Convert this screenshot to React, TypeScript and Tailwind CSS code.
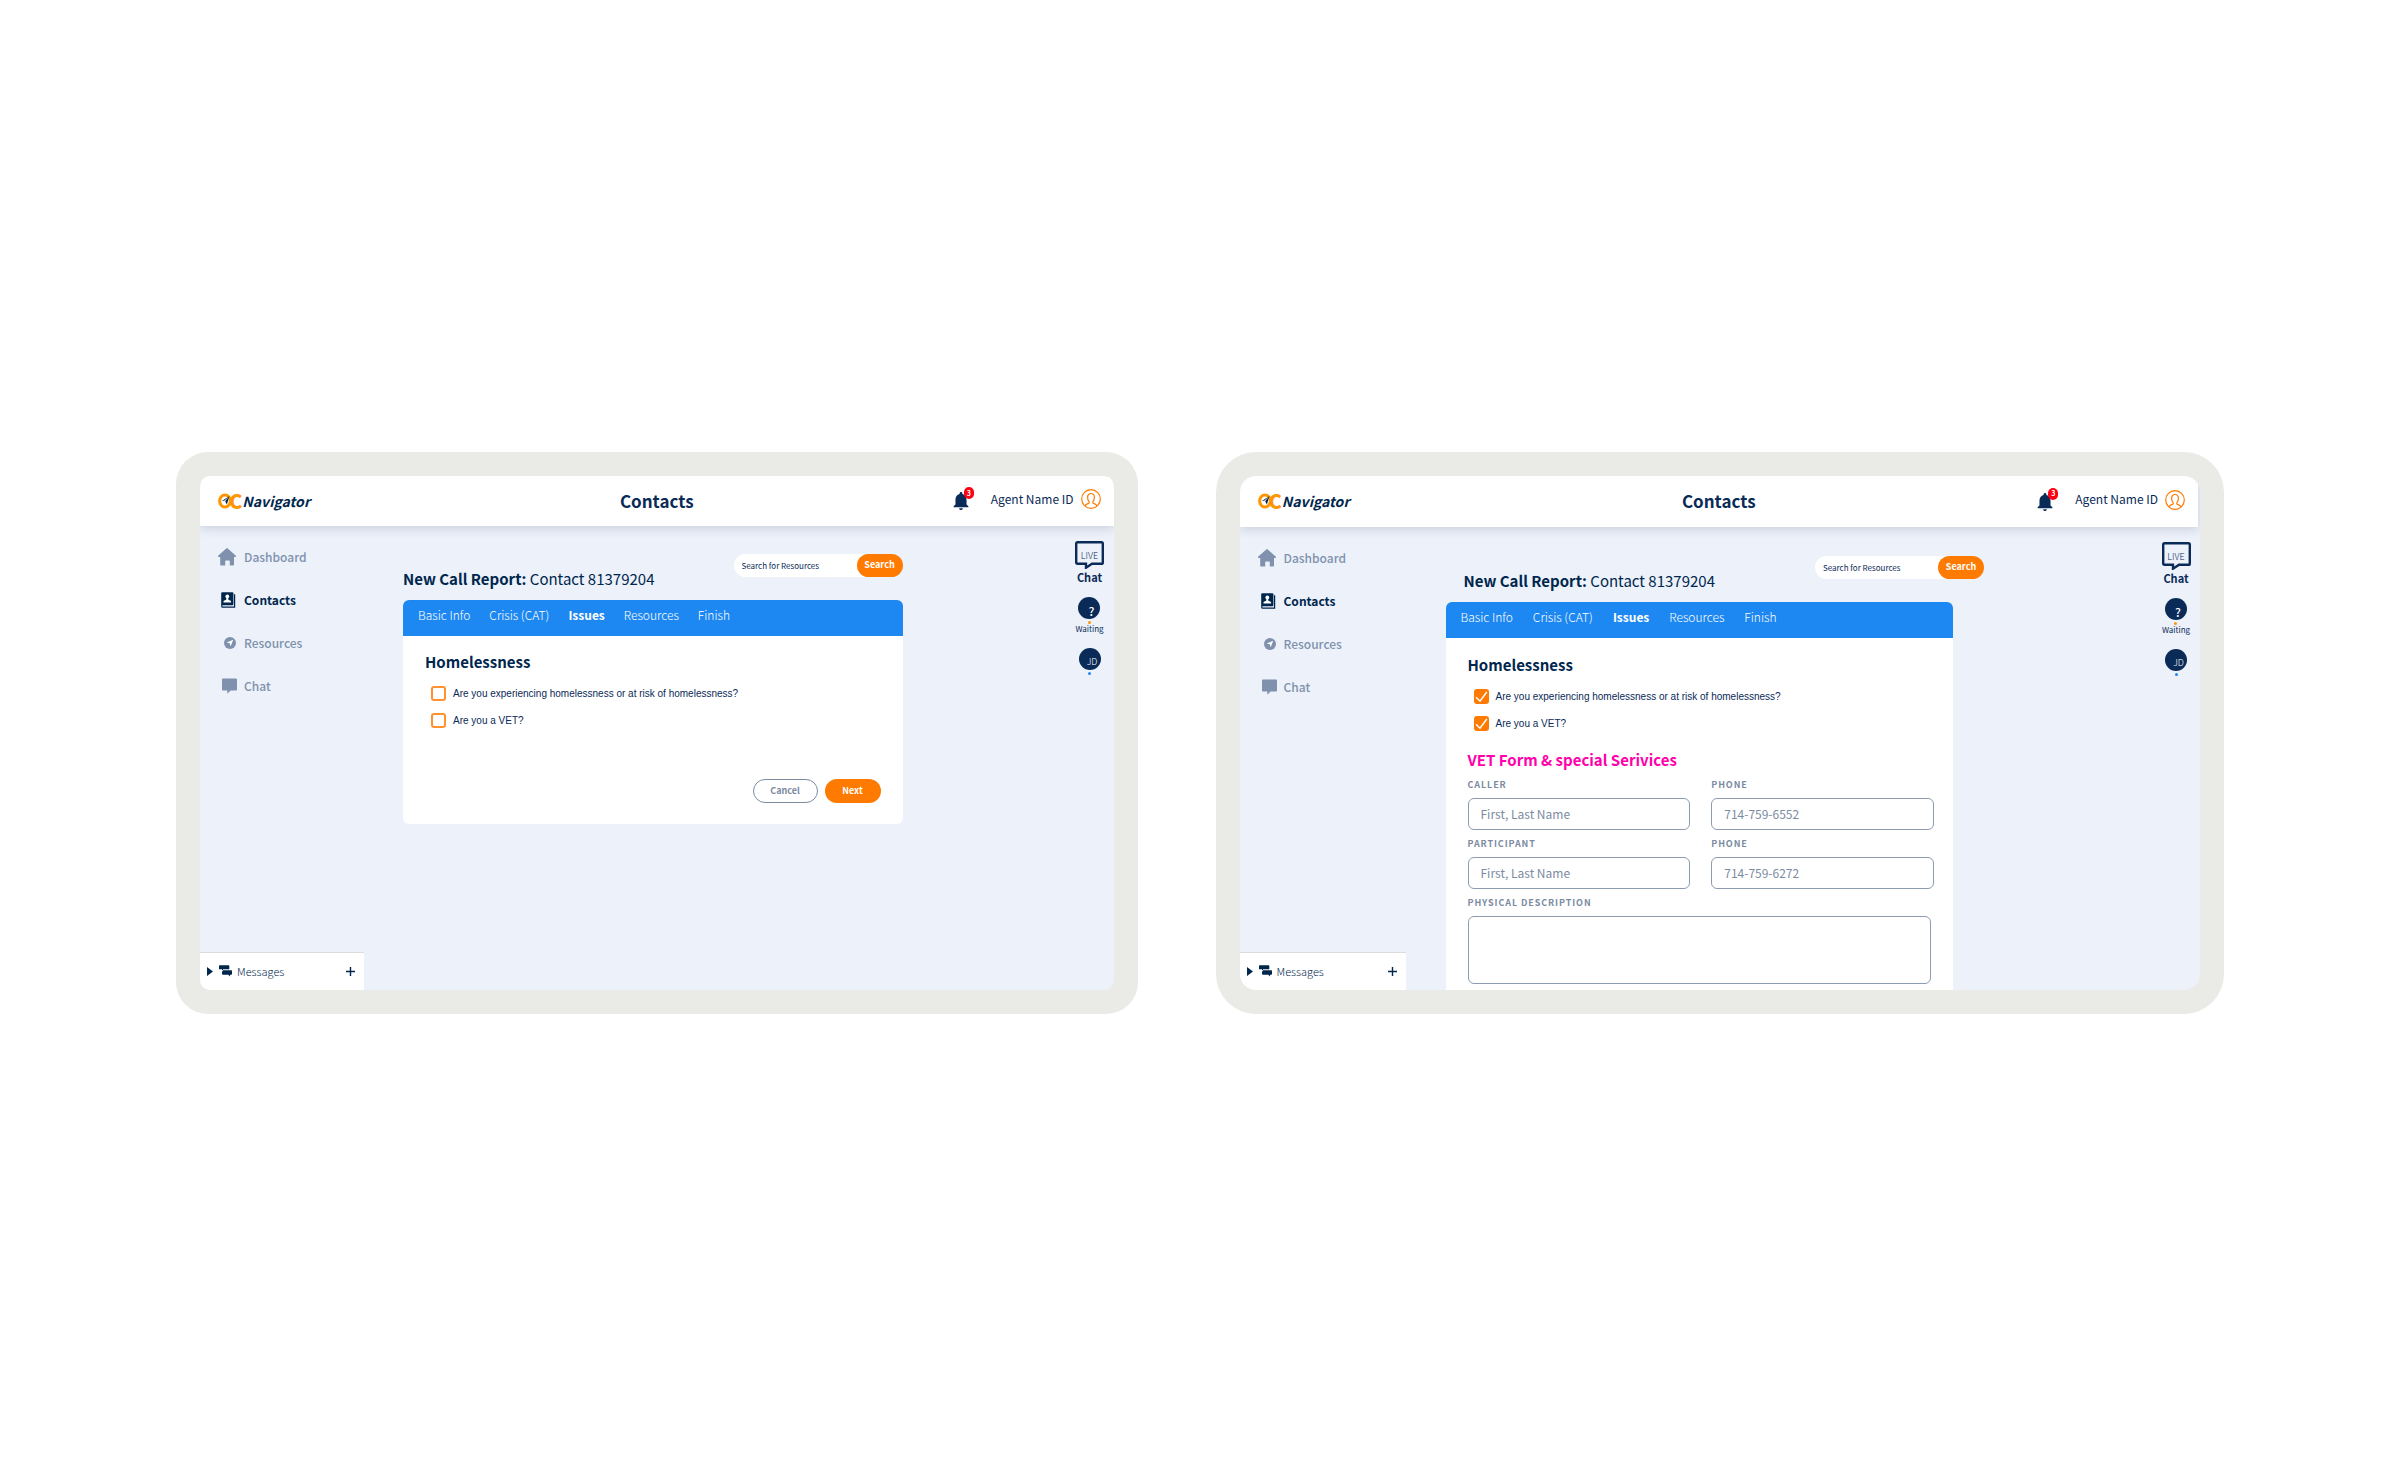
import { useState, type ReactNode } from 'react'
import { MdNotifications } from 'react-icons/md'
import clsx from 'clsx'

type NavItem = {
  label: string
  icon: ReactNode
  active?: boolean
}

const HomeIcon = () => (
  <svg viewBox="0 0 18 18" className="h-[18px] w-[18px]" fill="currentColor">
    <path d="M8.3.4a1.1 1.1 0 0 1 1.4 0l8 7.2c.5.5.3 1.3-.5 1.3H16v7.6c0 .6-.4 1-1 1h-3.2v-4.2c0-.5-.3-.8-.8-.8H8c-.5 0-.8.3-.8.8v4.2H3.2c-.6 0-1-.4-1-1V8.9H.8C0 8.9-.2 8.1.3 7.6z" />
  </svg>
)

const ContactIcon = () => (
  <svg viewBox="0 0 15 16" className="ml-[3px] h-4 w-[15px]">
    <rect x="0.2" y="0.3" width="12.2" height="13" rx="1" fill="currentColor" />
    <path d="M.8 12.500v2c0 .4.3.6.6.6h12.200V2.300" fill="none" stroke="currentColor" strokeWidth="1.200" />
    <circle cx="6.300" cy="4.400" r="1.900" fill="#fff" />
    <path d="M5.500 5.500h1.600l.3 2.200 2.300 1c.3.200.4.500.4.900v.8H2.500v-.8c0-.4.100-.7.400-.9l2.300-1z" fill="#fff" />
  </svg>
)

const CompassIcon = () => (
  <svg viewBox="0 0 12 12" className="ml-[6px] h-3 w-3">
    <circle cx="6" cy="6" r="6" fill="currentColor" />
    <path d="M9.2 2.8 6.7 9.3 5.8 6.3 2.7 5.5z" fill="#fff" />
  </svg>
)

const ChatIcon = () => (
  <svg viewBox="0 0 15 16" className="ml-1 h-4 w-[15px]" fill="currentColor">
    <path d="M1.1.4h12.800c.6 0 1.100.5 1.100 1.100v10c0 .6-.5 1.100-1.100 1.100H8.600L5.300 15.700v-3.100H1.100C.5 12.600 0 12.100 0 11.500v-10C0 .9.5.4 1.100.4z" />
  </svg>
)

const MessagesIcon = () => (
  <svg viewBox="0 0 13 12" className="h-3 w-[13px]" fill="currentColor">
    <path d="M.8.3h8.900c.3 0 .6.300.6.600v2.800c0 .3-.3.600-.6.600H4.300L3 5.500V4.300H.8c-.5 0-.8-.3-.8-.6V.9C0 .6.300.3.800.3z" />
    <path d="M4.100 5.200h8.100c.5 0 .8.300.8.600v3.300c0 .4-.3.700-.8.700h-1.100v1.600L9.300 9.800H4c-.7 0-1-.3-1-.7V6.900z" />
  </svg>
)

const AvatarIcon = () => (
  <svg viewBox="0 0 20 20" className="h-5 w-5" fill="none" stroke="#ff7a00" strokeWidth="1.2">
    <circle cx="10" cy="10" r="9.3" />
    <path d="M4 17.200c.3-1.700 1.100-2.100 3.500-2.800.8-.3.900-1.300.4-2-1-1.200-1.300-2.400-1.300-3.900 0-2.500 1.300-4 3.400-4s3.400 1.500 3.400 4c0 1.500-.3 2.700-1.300 3.900-.5.7-.4 1.700.4 2 2.400.7 3.200 1.100 3.500 2.800" />
  </svg>
)

const navItems: NavItem[] = [
  { label: 'Dashboard', icon: <HomeIcon /> },
  { label: 'Contacts', icon: <ContactIcon />, active: true },
  { label: 'Resources', icon: <CompassIcon /> },
  { label: 'Chat', icon: <ChatIcon /> },
]

const tabs = ['Basic Info', 'Crisis (CAT)', 'Issues', 'Resources', 'Finish']

function Logo() {
  return (
    <a href="#" className="flex items-center pl-[5px] text-[#00264d]">
      <svg viewBox="0 0 14 16" className="h-4 w-[14px]">
        <ellipse cx="7" cy="8" rx="5.4" ry="5.9" fill="none" stroke="#ff9500" strokeWidth="3" />
        <path d="M11.4 3 8.900 11.600 7.200 8.200z" fill="#00264d" />
        <path d="M11.4 3 3.600 8.300 6.600 7.600z" fill="#00264d" />
      </svg>
      <span className="-ml-[3px] text-xl leading-5 font-black text-[#ff9500]">C</span>
      <span className="text-sm leading-5 font-bold italic">Navigator</span>
    </a>
  )
}

function Header({ className }: { className: string }) {
  return (
    <header
      className={clsx(
        'relative z-10 grid shrink-0 grid-cols-[1fr_auto_1fr] items-center bg-white px-[13px] shadow-[0_2px_10px_rgba(40,50,80,0.18)]',
        className
      )}
    >
      <Logo />
      <h1 className="text-[17px] leading-6 font-bold text-[#0a2a57]">Contacts</h1>
      <div className="flex items-center justify-end pb-[3px]">
        <button type="button" aria-label="Notifications" className="relative mr-[22px] pt-1 text-[#0a2a57]">
          <MdNotifications viewBox="4 2.5 16 19.5" className="h-[18px] w-4" />
          <span className="absolute -top-px -right-[5px] flex h-3 w-[10px] items-center justify-center rounded-full bg-[#ff0012] text-[7px] leading-none font-bold text-white">
            3
          </span>
        </button>
        <span className="mr-[7px] pb-px text-xs leading-5 text-[#0a2a57]">Agent Name ID</span>
        <AvatarIcon />
      </div>
    </header>
  )
}

function Sidebar({ className }: { className: string }) {
  return (
    <aside className={clsx('flex shrink-0 flex-col justify-between', className)}>
      <nav className="flex flex-col gap-[23px] pt-[21px] pl-[18px]">
        {navItems.map((item) => (
          <a
            key={item.label}
            href="#"
            className={clsx(
              'flex h-5 items-center text-xs',
              item.active ? 'font-bold text-[#00264d]' : 'font-medium text-[#7f91ad]'
            )}
          >
            <span className="w-[26px]">{item.icon}</span>
            {item.label}
          </a>
        ))}
      </nav>
      <div className="flex h-[38px] items-center border-t border-[#dcdcdc] bg-white pr-[9px] pl-[7px] text-[#00264d]">
        <svg viewBox="0 0 6 9" className="mr-[6px] h-[9px] w-[6px]" fill="currentColor">
          <path d="M0 0l6 4.5L0 9z" />
        </svg>
        <MessagesIcon />
        <span className="ml-[5px] text-[11px] leading-4 font-light">Messages</span>
        <button type="button" aria-label="New message" className="ml-auto">
          <svg viewBox="0 0 9 9" className="h-[9px] w-[9px]" stroke="currentColor" strokeWidth="1.4">
            <path d="M4.5 0v9M0 4.500h9" />
          </svg>
        </button>
      </div>
    </aside>
  )
}

function ChatRail() {
  return (
    <aside className="flex w-12 shrink-0 flex-col items-center pt-[15px] text-[#0a2a57]">
      <button type="button" className="flex flex-col items-center">
        <span className="relative">
          <svg viewBox="0 0 29 28" className="h-7 w-[29px]" fill="none" stroke="currentColor" strokeWidth="2.4">
            <path d="M2.600 1.200h23.800q1.400 0 1.400 1.400v18.800q0 1.400-1.400 1.400H17l-6 3.900v-3.900H2.600q-1.400 0-1.400-1.400V2.600q0-1.400 1.400-1.400z" />
          </svg>
          <span className="absolute inset-x-0 top-[9px] text-center text-[9px] leading-3 font-light">LIVE</span>
        </span>
        <span className="text-[11px] leading-4 font-bold">Chat</span>
      </button>
      <button type="button" className="mt-3 flex flex-col items-center">
        <span className="flex h-[22px] w-[22px] items-end justify-center rounded-full bg-[#0a2a57] pl-1 text-xs leading-4 font-medium text-white">
          ?
        </span>
        <span className="mt-[2px] h-[3px] w-[3px] rounded-full bg-[#ff9500]" />
        <span className="text-[8px] leading-[10px]">Waiting</span>
      </button>
      <button type="button" className="mt-[14px] flex flex-col items-center">
        <span className="flex h-[22px] w-[22px] items-end justify-center rounded-full bg-[#0a2a57] pl-[5px] text-[9px] leading-4 font-light text-white">
          JD
        </span>
        <span className="mt-[2px] h-[3px] w-[3px] rounded-full bg-[#1e88f2]" />
      </button>
    </aside>
  )
}

function TitleRow({ className }: { className?: string }) {
  return (
    <div className={clsx('flex h-[46px] items-start justify-between', className)}>
      <h2 className="self-end pb-[9px] text-[15px] leading-6 whitespace-nowrap text-[#00264d]">
        <b>New Call Report:</b> Contact 81379204
      </h2>
      <form className="flex h-[23px] w-[169px] rounded-full bg-white" onSubmit={(e) => e.preventDefault()}>
        <input
          type="search"
          aria-label="Search for Resources"
          placeholder="Search for Resources"
          className="min-w-0 flex-1 bg-transparent pt-[2px] pl-2 text-[8px] text-[#0a2a57] outline-none placeholder:text-[#0a2a57]"
        />
        <button type="submit" className="w-[46px] rounded-full bg-[#ff7a00] text-[9px] font-bold text-white">
          Search
        </button>
      </form>
    </div>
  )
}

function Tabs({ className }: { className: string }) {
  return (
    <nav className={clsx('flex h-9 rounded-t-md bg-[#1e88f2] pt-[5px]', className)}>
      {tabs.map((tab) => (
        <a
          key={tab}
          href="#"
          className={clsx(
            'text-xs leading-5 whitespace-nowrap text-white',
            tab === 'Issues' ? 'font-bold' : 'font-light'
          )}
        >
          {tab}
        </a>
      ))}
    </nav>
  )
}

function Question({ label, defaultChecked }: { label: string; defaultChecked?: boolean }) {
  const [checked, setChecked] = useState(!!defaultChecked)

  return (
    <label className="flex items-center gap-[7px] pl-[6px] font-['Liberation_Sans',sans-serif] text-[10px] leading-[15px] text-[#0a2a57]">
      <span className="relative h-[15px] w-[15px]">
        <input
          type="checkbox"
          checked={checked}
          onChange={(e) => setChecked(e.target.checked)}
          className="block h-[15px] w-[15px] appearance-none rounded-[3px] border-2 border-[#ff9130] bg-white checked:border-[#ff7a00] checked:bg-[#ff7a00]"
        />
        {checked && (
          <svg viewBox="0 0 15 15" className="pointer-events-none absolute inset-0" fill="none" stroke="#fff" strokeWidth="1.5">
            <path d="M2 8.200l4 4L12.800 3" />
          </svg>
        )}
      </span>
      {label}
    </label>
  )
}

function Field({ id, label, placeholder }: { id: string; label: string; placeholder: string }) {
  return (
    <div className="flex flex-col">
      <label htmlFor={id} className="text-[9px] leading-[15px] font-bold tracking-widest text-[#7b8ba1] uppercase">
        {label}
      </label>
      <input
        id={id}
        placeholder={placeholder}
        className="mt-[6px] h-8 min-w-0 rounded-md border border-[#8d9bb0] bg-white px-3 pb-px text-xs text-[#0a2a57] placeholder:text-[#7b8ba1]"
      />
    </div>
  )
}

function Questions({ checked }: { checked?: boolean }) {
  return (
    <>
      <h3 className="text-[15px] leading-6 font-bold text-[#00264d]">Homelessness</h3>
      <div className="mt-3 flex flex-col gap-3">
        <Question label="Are you experiencing homelessness or at risk of homelessness?" defaultChecked={checked} />
        <Question label="Are you a VET?" defaultChecked={checked} />
      </div>
    </>
  )
}

type TabletProps = {
  frame: string
  screen: string
  header: string
  sidebar: string
  children: ReactNode
}

function Tablet({ frame, screen, header, sidebar, children }: TabletProps) {
  return (
    <section className={clsx('flex bg-[#eaebe6] p-6', frame)}>
      <div className={clsx('flex min-h-[514px] min-w-0 flex-1 flex-col overflow-hidden bg-[#ecf1fa]', screen)}>
        <Header className={header} />
        <div className="flex flex-1">
          <Sidebar className={sidebar} />
          {children}
          <ChatRail />
        </div>
      </div>
    </section>
  )
}

export default function App() {
  return (
    <div className="grid min-h-screen grid-cols-[962fr_1009fr] content-center gap-[78px] bg-white px-[176px] pt-px font-['Noto_Sans_CJK_SC','Source_Sans_Pro',sans-serif]">
      <Tablet frame="rounded-[32px]" screen="rounded-[10px]" header="h-[50px]" sidebar="w-[164px]">
        <main className="min-w-0 flex-1 pt-7 pr-[163px] pl-[39px]">
          <TitleRow />
          <div className="rounded-md bg-white">
            <Tabs className="gap-[19px] px-[15px]" />
            <div className="px-[22px] pt-[14px] pb-[21px]">
              <Questions />
              <div className="mt-[51px] flex justify-end gap-[7px] text-[9px] font-bold">
                <button type="button" className="h-6 w-[65px] rounded-full border border-[#7b8ba1] pt-px text-[#7b8ba1]">
                  Cancel
                </button>
                <button type="button" className="h-6 w-14 rounded-full bg-[#ff7a00] pt-px text-white">
                  Next
                </button>
              </div>
            </div>
          </div>
        </main>
      </Tablet>

      <Tablet frame="rounded-[40px]" screen="rounded-2xl" header="mr-[2px] h-[51px]" sidebar="w-[166px]">
        <main className="flex min-w-0 flex-1 flex-col pt-[29px]">
          <TitleRow className="pr-[168px] pl-[58px]" />
          <div className="mr-[199px] ml-10 flex-1 rounded-t-md bg-white">
            <Tabs className="gap-5 px-[15px]" />
            <div className="px-[22px] pt-[15px] pb-1">
              <Questions checked />
              <h3 className="mt-[17px] text-[15px] leading-6 font-bold text-[#ff00aa]">VET Form &amp; special Serivices</h3>
              <div className="mt-[5px] mr-[-3px] grid grid-cols-2 gap-x-[21px] gap-y-[6px]">
                <Field id="caller" label="Caller" placeholder="First, Last Name" />
                <Field id="caller-phone" label="Phone" placeholder="714-759-6552" />
                <Field id="participant" label="Participant" placeholder="First, Last Name" />
                <Field id="participant-phone" label="Phone" placeholder="714-759-6272" />
              </div>
              <label
                htmlFor="description"
                className="mt-[6px] block text-[9px] leading-[15px] font-bold tracking-widest text-[#7b8ba1] uppercase"
              >
                Physical Description
              </label>
              <textarea
                id="description"
                className="mt-[6px] block h-[68px] w-full resize-none rounded-md border border-[#8d9bb0] bg-white p-3 text-xs text-[#0a2a57]"
              />
            </div>
          </div>
        </main>
      </Tablet>
    </div>
  )
}
